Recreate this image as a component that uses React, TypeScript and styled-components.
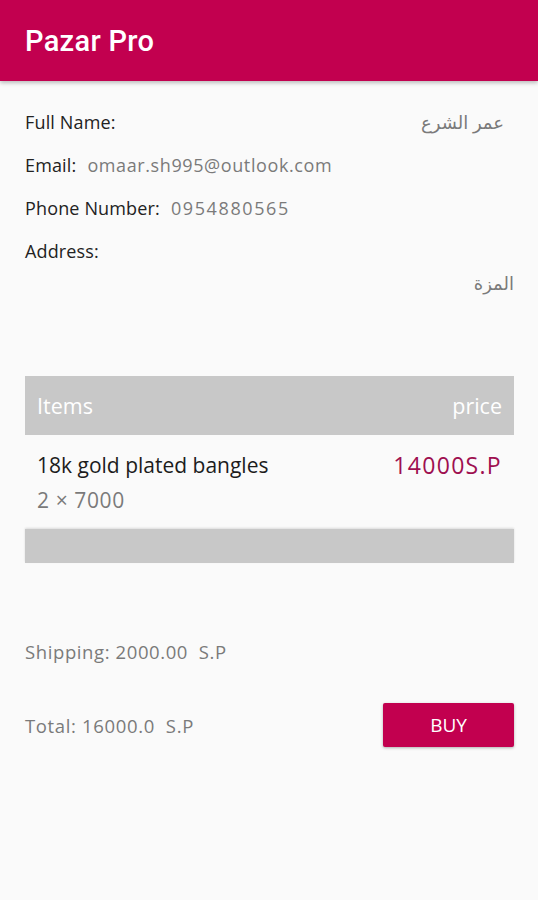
import React from "react";
import styled, { createGlobalStyle } from "styled-components";

const Global = createGlobalStyle`
  html, body { margin: 0; padding: 0; background: #fafafa; }
  body { font-family: "Open Sans", "Noto Sans", sans-serif; }
  * { box-sizing: border-box; }
`;

const Page = styled.div`
  width: 538px;
  min-height: 900px;
  background: #fafafa;
`;

const AppBar = styled.header`
  height: 81px;
  background: #c2004f;
  display: flex;
  align-items: center;
  padding: 0 25px;
  box-shadow: 0 2px 4px rgba(0, 0, 0, 0.25);
`;

const Title = styled.h1`
  margin: 0;
  color: #fff;
  font-family: Roboto, "Noto Sans", sans-serif;
  font-weight: 500;
  font-size: 29px;
  letter-spacing: 0.3px;
`;

const Content = styled.main`
  padding: 19px 24px 0 25px;
  display: flex;
  flex-direction: column;
`;

const InfoRow = styled.div`
  height: 43px;
  display: flex;
  align-items: center;
  font-size: 18px;
  color: #222;
`;

const Label = styled.span`
  color: #222;
  letter-spacing: 0.15px;
`;

const Value = styled.span<{ $spacing?: number }>`
  color: #7a7a7a;
  margin-left: 11px;
  letter-spacing: ${(p) => p.$spacing ?? 0}px;
`;

const RtlValue = styled.span`
  margin-left: auto;
  margin-right: 10px;
  color: #7a7a7a;
  direction: rtl;
  font-family: "Noto Sans", "DejaVu Sans", sans-serif;
  font-size: 18px;
`;

const AddressLine = styled.div`
  height: 22px;
  text-align: right;
  direction: rtl;
  font-family: "Noto Sans", "DejaVu Sans", sans-serif;
  font-size: 18px;
  color: #7a7a7a;
  line-height: 22px;
`;

const Table = styled.section`
  margin-top: 82px;
  display: flex;
  flex-direction: column;
`;

const TableHeader = styled.div`
  height: 59px;
  background: #c8c8c8;
  display: flex;
  align-items: center;
  justify-content: space-between;
  padding: 0 12px;
  color: #fff;
  font-size: 21.5px;
`;

const ItemRow = styled.div`
  height: 94px;
  display: flex;
  justify-content: space-between;
  padding: 17px 12px 0;
`;

const ItemInfo = styled.div`
  display: flex;
  flex-direction: column;
  gap: 9px;
`;

const ItemName = styled.span`
  font-size: 21px;
  color: #1c1c1c;
  line-height: 26px;
`;

const ItemQty = styled.span`
  font-size: 21px;
  color: #7a7a7a;
  line-height: 26px;
  letter-spacing: 0.6px;
`;

const ItemPrice = styled.span`
  font-size: 23px;
  color: #9e0f50;
  line-height: 26px;
  letter-spacing: 1.3px;
`;

const TableFooter = styled.div`
  height: 34px;
  background: #c8c8c8;
  box-shadow: 0 -1px 2px rgba(0, 0, 0, 0.12);
`;

const Shipping = styled.div`
  margin-top: 78px;
  font-size: 18.5px;
  line-height: 22px;
  color: #7a7a7a;
  letter-spacing: 0.6px;
`;

const TotalRow = styled.div`
  margin-top: 40px;
  display: flex;
  align-items: center;
  justify-content: space-between;
`;

const Total = styled.span`
  font-size: 18.5px;
  color: #7a7a7a;
  letter-spacing: 0.65px;
`;

const BuyButton = styled.button`
  width: 131px;
  height: 44px;
  border: none;
  border-radius: 2px;
  background: #c2004f;
  color: #fff;
  font-family: "Open Sans", "Noto Sans", sans-serif;
  font-size: 19px;
  box-shadow: 0 1px 3px rgba(0, 0, 0, 0.3);
`;

export default function App() {
  return (
    <Page>
      <Global />
      <AppBar>
        <Title>Pazar Pro</Title>
      </AppBar>
      <Content>
        <InfoRow>
          <Label>Full Name:</Label>
          <RtlValue>عمر الشرع</RtlValue>
        </InfoRow>
        <InfoRow>
          <Label>Email:</Label>
          <Value $spacing={0.6}>omaar.sh995@outlook.com</Value>
        </InfoRow>
        <InfoRow>
          <Label>Phone Number:</Label>
          <Value $spacing={1.6}>0954880565</Value>
        </InfoRow>
        <InfoRow>
          <Label>Address:</Label>
        </InfoRow>
        <AddressLine>المزة</AddressLine>
        <Table>
          <TableHeader>
            <span>Items</span>
            <span>price</span>
          </TableHeader>
          <ItemRow>
            <ItemInfo>
              <ItemName>18k gold plated bangles</ItemName>
              <ItemQty>2 × 7000</ItemQty>
            </ItemInfo>
            <ItemPrice>14000S.P</ItemPrice>
          </ItemRow>
          <TableFooter />
        </Table>
        <Shipping>Shipping: 2000.00&nbsp;&nbsp;S.P</Shipping>
        <TotalRow>
          <Total>Total: 16000.0&nbsp;&nbsp;S.P</Total>
          <BuyButton>BUY</BuyButton>
        </TotalRow>
      </Content>
    </Page>
  );
}
